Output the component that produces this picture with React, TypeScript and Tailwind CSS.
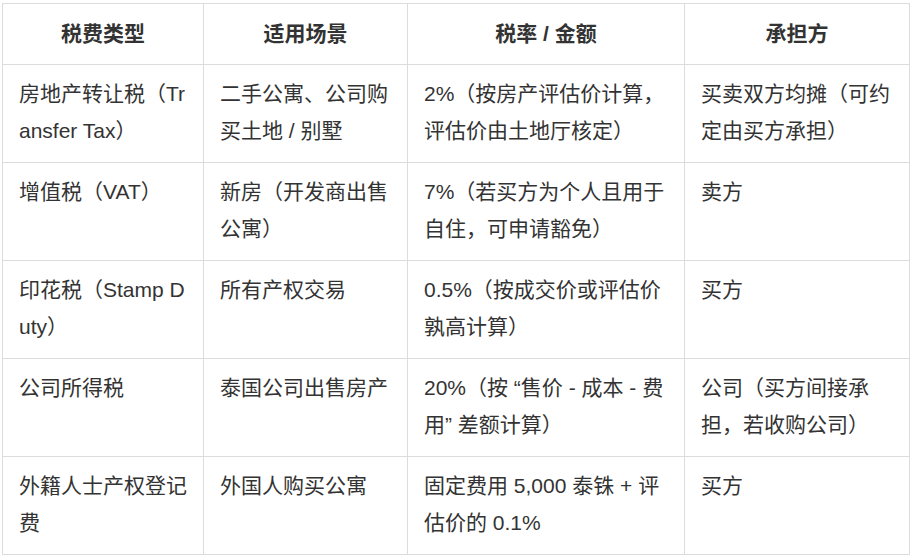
import React from "react";

const rows: string[][] = [
  ["房地产转让税（Transfer Tax）", "二手公寓、公司购买土地 / 别墅", "2%（按房产评估价计算，评估价由土地厅核定）", "买卖双方均摊（可约定由买方承担）"],
  ["增值税（VAT）", "新房（开发商出售公寓）", "7%（若买方为个人且用于自住，可申请豁免）", "卖方"],
  ["印花税（Stamp Duty）", "所有产权交易", "0.5%（按成交价或评估价孰高计算）", "买方"],
  ["公司所得税", "泰国公司出售房产", "20%（按 “售价 - 成本 - 费用” 差额计算）", "公司（买方间接承担，若收购公司）"],
  ["外籍人士产权登记费", "外国人购买公寓", "固定费用 5,000 泰铢 + 评估价的 0.1%", "买方"],
];

const headers = ["税费类型", "适用场景", "税率 / 金额", "承担方"];

export default function App() {
  return (
    <div className="w-[910px] h-[555px] bg-white overflow-hidden pt-[3px] pl-[2px]">
      <table
        className="w-[907px] table-fixed border-collapse text-[21px] leading-[36.5px] text-[#333] break-all"
        style={{ fontFamily: '"Liberation Sans", "Noto Sans CJK SC", sans-serif' }}
      >
        <colgroup>
          <col className="w-[201px]" />
          <col className="w-[204px]" />
          <col className="w-[277px]" />
          <col className="w-[225px]" />
        </colgroup>
        <thead>
          <tr>
            {headers.map((h) => (
              <th
                key={h}
                className="border border-[#dcdcdc] px-4 py-3 text-center font-bold align-middle leading-[36px]"
              >
                <div className="h-[36px]">{h}</div>
              </th>
            ))}
          </tr>
        </thead>
        <tbody>
          {rows.map((r, i) => (
            <tr key={i}>
              {r.map((c, j) => (
                <td
                  key={j}
                  className="border border-[#dcdcdc] px-4 pt-[11px] pb-[13px] text-left align-top font-normal"
                >
                  <div className="h-[73px]">{c}</div>
                </td>
              ))}
            </tr>
          ))}
        </tbody>
      </table>
    </div>
  );
}
